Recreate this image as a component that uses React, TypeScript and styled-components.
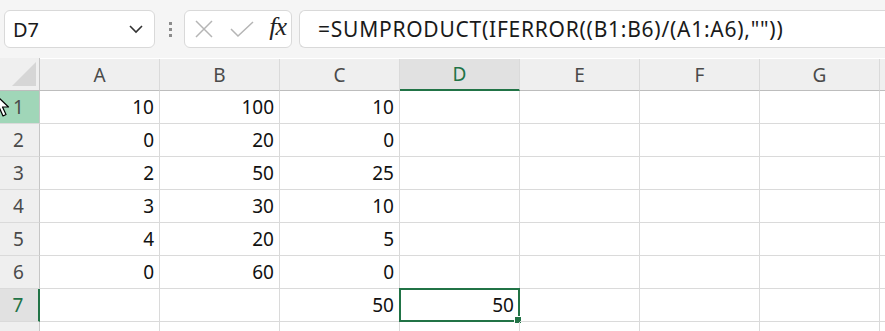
import React, { FC } from 'react';
import styled, { createGlobalStyle, css } from 'styled-components';

const GlobalStyle = createGlobalStyle`
    body {
        margin: 0;
        background: #ffffff;
        font-family: 'Noto Sans', 'Open Sans', sans-serif;
        overflow: hidden;
    }
`;

const Green = '#217346';
const GridLine = '#dadada';

const Page = styled.div`
    position: relative;
    width: 885px;
    height: 331px;
    overflow: hidden;
`;

const TopBar = styled.div`
    display: flex;
    align-items: center;
    height: 58px;
    padding: 0 0 0 4px;
    box-sizing: border-box;
    background: #f5f5f5;
`;

const Box = styled.div`
    display: flex;
    align-items: center;
    height: 38px;
    box-sizing: border-box;
    background: #ffffff;
    border: 1px solid #d9d9d9;
    border-radius: 6px;
`;

const NameBox = styled(Box)`
    width: 151px;
    padding: 0 10px 0 8px;
    justify-content: space-between;
    font-size: 20px;
    color: #1a1a1a;
`;

const Dots = styled.div`
    display: flex;
    flex-direction: column;
    gap: 3px;
    margin: 0 12px 0 14px;

    span {
        width: 3px;
        height: 3px;
        background: #8c8c8c;
    }
`;

const ButtonBox = styled(Box)`
    width: 108px;
    padding: 0 5px 0 8px;
    justify-content: space-between;
`;

const Fx = styled.span`
    font-family: 'Liberation Serif', serif;
    font-style: italic;
    font-size: 26px;
    color: #222;
    letter-spacing: -1px;
    margin-top: -4px;
`;

const FormulaBox = styled(Box)`
    flex: 1;
    margin-left: 7px;
    padding-left: 18px;
    border-right: none;
    border-radius: 6px 0 0 6px;
    font-size: 21px;
    letter-spacing: 0.75px;
    color: #1a1a1a;
    white-space: nowrap;
`;

const Sheet = styled.div`
    display: grid;
    grid-template-columns: 40px repeat(8, 120px);
    grid-auto-rows: 33px;
    grid-template-rows: 33px;
    background: #ffffff;
`;

const Corner = styled.div`
    position: relative;
    background: #efefef;
    border-right: 1px solid #c6c6c6;
    border-bottom: 1px solid #bdbdbd;

    &::after {
        content: '';
        position: absolute;
        right: 3px;
        bottom: 4px;
        width: 0;
        height: 0;
        border-left: 24px solid transparent;
        border-bottom: 24px solid #d6d6d6;
    }
`;

const ColHead = styled.div<{ $active?: boolean }>`
    display: flex;
    align-items: center;
    justify-content: center;
    box-sizing: border-box;
    font-size: 19px;
    color: #4a4a4a;
    background: #efefef;
    border-right: 1px solid ${GridLine};
    border-bottom: 1px solid #bdbdbd;
    margin-top: 1px;
    ${p => p.$active && css`
        background: #e1e1e1;
        color: ${Green};
        border-bottom: 2px solid ${Green};
    `}
`;

const RowHead = styled.div<{ $hover?: boolean; $active?: boolean }>`
    display: flex;
    align-items: center;
    justify-content: center;
    box-sizing: border-box;
    font-size: 19px;
    color: #4a4a4a;
    background: #efefef;
    border-right: 1px solid #c6c6c6;
    border-bottom: 1px solid ${GridLine};
    padding-right: 2px;
    ${p => p.$hover && css`
        background: #a0d6b8;
    `}
    ${p => p.$active && css`
        background: #e1e1e1;
        color: ${Green};
        border-right: 2px solid ${Green};
    `}
`;

const Cell = styled.div<{ $selected?: boolean }>`
    position: relative;
    display: flex;
    align-items: center;
    justify-content: flex-end;
    box-sizing: border-box;
    padding-right: 5px;
    font-size: 19px;
    color: #111;
    border-right: 1px solid ${GridLine};
    border-bottom: 1px solid ${GridLine};
    ${p => p.$selected && css`
        border: 2px solid ${Green};
        margin: -1px 0 0 -1px;
        padding-right: 4px;
        &::after {
            content: '';
            position: absolute;
            right: -4px;
            bottom: -4px;
            width: 6px;
            height: 6px;
            background: ${Green};
            border: 1px solid #fff;
        }
    `}
`;

const Cursor = styled.svg`
    position: absolute;
    left: -6px;
    top: 93px;
`;

const columns = ['A', 'B', 'C', 'D', 'E', 'F', 'G', 'H'];

const data: (string | number)[][] = [
    [10, 100, 10],
    [0, 20, 0],
    [2, 50, 25],
    [3, 30, 10],
    [4, 20, 5],
    [0, 60, 0],
    ['', '', 50, 50],
];

const App: FC = () => {
    return (
        <Page>
            <GlobalStyle />
            <TopBar>
                <NameBox>
                    D7
                    <svg width="16" height="10" viewBox="0 0 16 10">
                        <path d="M2 2 L8 8 L14 2" fill="none" stroke="#333" strokeWidth="1.6" />
                    </svg>
                </NameBox>
                <Dots><span /><span /><span /></Dots>
                <ButtonBox>
                    <svg width="22" height="22" viewBox="0 0 22 22">
                        <path d="M3 3 L19 19 M19 3 L3 19" stroke="#b5b5b5" strokeWidth="1.5" />
                    </svg>
                    <svg width="26" height="22" viewBox="0 0 26 22">
                        <path d="M2 11 L9 18 L24 4" fill="none" stroke="#b5b5b5" strokeWidth="1.5" />
                    </svg>
                    <Fx>fx</Fx>
                </ButtonBox>
                <FormulaBox>=SUMPRODUCT(IFERROR((B1:B6)/(A1:A6),""))</FormulaBox>
            </TopBar>
            <Sheet>
                <Corner />
                {columns.map(c => (
                    <ColHead key={c} $active={c === 'D'}>{c === 'H' ? '' : c}</ColHead>
                ))}
                {data.map((row, r) => (
                    <React.Fragment key={r}>
                        <RowHead $hover={r === 0} $active={r === 6}>{r + 1}</RowHead>
                        {columns.map((c, i) => (
                            <Cell key={c} $selected={r === 6 && i === 3}>{row[i] ?? ''}</Cell>
                        ))}
                    </React.Fragment>
                ))}
                <RowHead />
                {columns.map(c => <Cell key={c} />)}
            </Sheet>
            <Cursor width="18" height="26" viewBox="0 0 18 26">
                <path d="M1 1 L1 19 L5.5 15 L9 23 L12 21.5 L8.5 14 L14.5 14 Z" fill="#fff" stroke="#000" strokeWidth="1.2" strokeLinejoin="round" />
            </Cursor>
        </Page>
    );
};

export default App;
